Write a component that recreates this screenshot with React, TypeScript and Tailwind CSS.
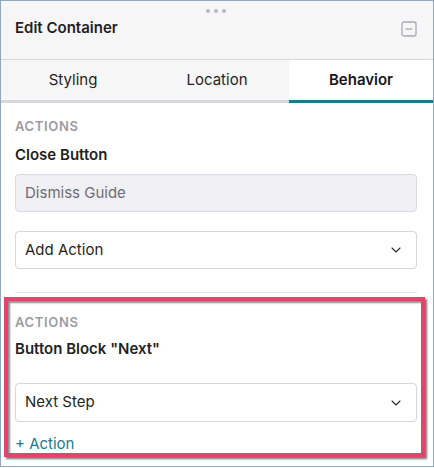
import { ChevronDown } from "lucide-react";

const font = { fontFamily: "Inter, 'Noto Sans', sans-serif" };

const SectionLabel = ({ children }: { children: React.ReactNode }) => (
  <div className="text-[13px] leading-4 font-semibold tracking-[0.05em] text-[#9b9ba4] uppercase">
    {children}
  </div>
);

const Select = ({ value, className = "" }: { value: string; className?: string }) => (
  <div
    className={`flex items-center justify-between rounded-[4px] border border-[#d6d6de] bg-white pl-[9px] pr-[12px] text-[15px] text-[#1f1f24] ${className}`}
  >
    <span>{value}</span>
    <ChevronDown size={16} strokeWidth={1.6} className="text-[#2b2b30]" />
  </div>
);

export default function App() {
  return (
    <div
      style={font}
      className="w-[434px] h-[467px] overflow-hidden border border-[#8ea9b9] bg-white flex flex-col"
    >
      {/* header */}
      <div className="h-[59px] shrink-0 border-b border-[#d6d6dc] bg-[#f6f6f7] pl-[14px] pr-[16px] flex flex-col">
        <div className="flex justify-center gap-[4px] pt-[8px]">
          <span className="w-[4px] h-[4px] rounded-full bg-[#b7b7c1]" />
          <span className="w-[4px] h-[4px] rounded-full bg-[#b7b7c1]" />
          <span className="w-[4px] h-[4px] rounded-full bg-[#b7b7c1]" />
        </div>
        <div className="mt-[5px] flex items-center justify-between">
          <h1 className="text-[15px] leading-5 font-semibold text-[#1f1f24]">Edit Container</h1>
          <svg width="16" height="16" viewBox="0 0 16 16" className="mt-[1px]">
            <rect x="1" y="1" width="14" height="14" rx="2" fill="none" stroke="#a8a8b2" strokeWidth="1.3" />
            <line x1="4.5" y1="8" x2="11.5" y2="8" stroke="#a8a8b2" strokeWidth="1.3" />
          </svg>
        </div>
      </div>

      {/* tabs */}
      <div className="grid grid-cols-3 shrink-0">
        <div className="h-[43px] border-b-[3px] border-[#d6d6dc] bg-[#f6f6f7] flex items-center justify-center text-[15px] text-[#1f1f24]">
          Styling
        </div>
        <div className="h-[43px] border-b-[3px] border-[#d6d6dc] bg-[#f6f6f7] flex items-center justify-center text-[15px] text-[#1f1f24]">
          Location
        </div>
        <div className="h-[43px] border-b-[3px] border-[#1c7a8c] bg-white flex items-center justify-center text-[15px] font-semibold text-[#16161a]">
          Behavior
        </div>
      </div>

      {/* section 1 */}
      <div className="pl-[14px] pr-[16px] pt-[15px]">
        <SectionLabel>Actions</SectionLabel>
        <div className="mt-[11px] text-[15px] leading-5 font-semibold text-[#1f1f24]">Close Button</div>
        <div className="mt-[9px] h-[38px] rounded-[4px] border border-[#d9d9e1] bg-[#f0f0f4] pl-[9px] flex items-center text-[15px] text-[#6c6c76]">
          Dismiss Guide
        </div>
        <Select value="Add Action" className="mt-[19px] h-[38px]" />
        <div className="mt-[23px] h-px bg-[#e4e4ea]" />
      </div>

      {/* section 2 */}
      <div className="relative flex-1 pl-[14px] pr-[16px] pt-[21px]">
        <SectionLabel>Actions</SectionLabel>
        <div className="mt-[9px] text-[15px] leading-5 font-semibold text-[#1f1f24]">Button Block "Next"</div>
        <Select value="Next Step" className="mt-[24px] h-[39px]" />
        <div className="mt-[12px] text-[15px] leading-5 text-[#1c7a8c]">+ Action</div>

        {/* highlight annotation */}
        <div className="pointer-events-none absolute left-[3px] top-[4px] w-[421px] h-[160px] border-[4px] border-[#e8426c] shadow-[2px_2px_2px_rgba(0,0,0,0.55),inset_2px_2px_2px_rgba(0,0,0,0.45)]" />
      </div>
    </div>
  );
}
